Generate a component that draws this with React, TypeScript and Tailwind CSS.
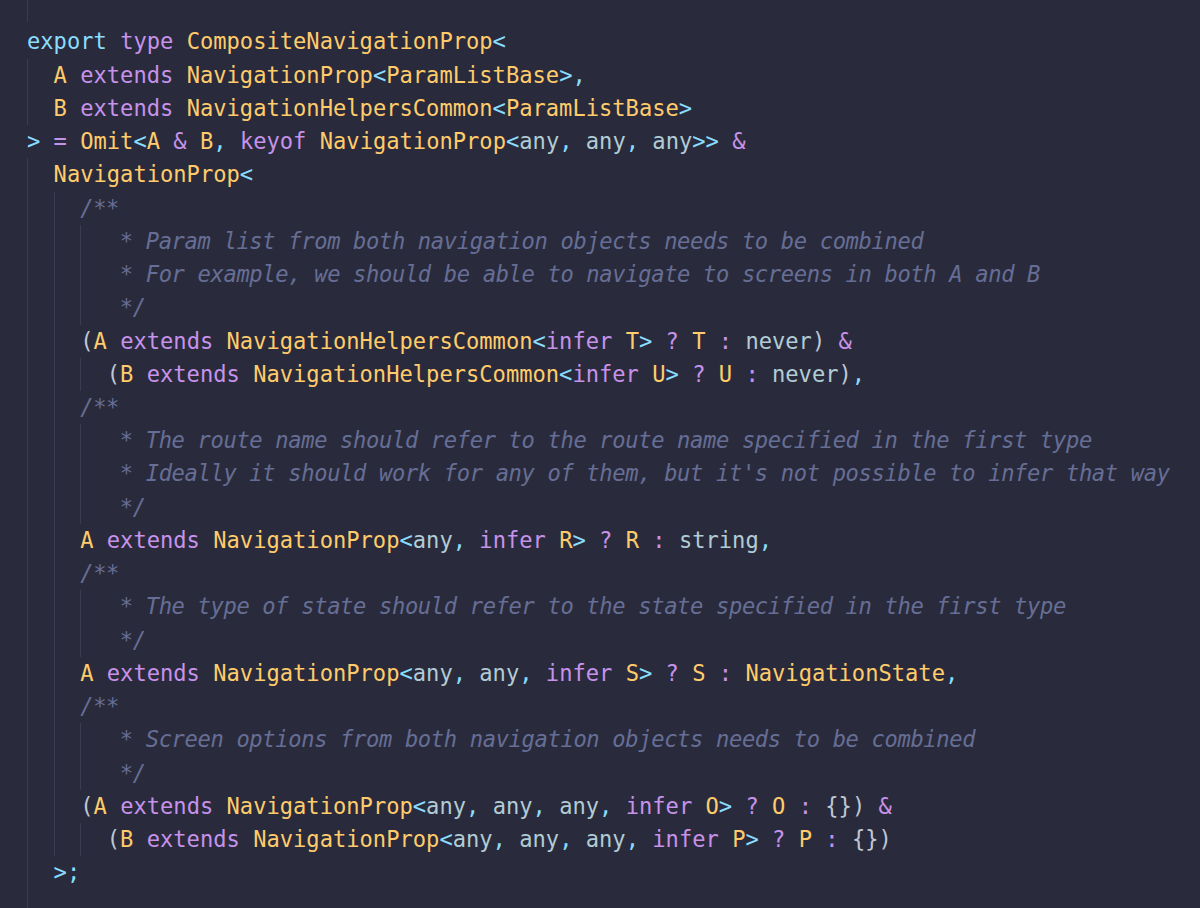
import React from "react";

type Tok = [string, string];
type Line = { g: boolean[]; t: Tok[] };

const CY = "text-[#89ddff]";
const PU = "text-[#c792ea]";
const YE = "text-[#ffcb6b]";
const LI = "text-[#b2ccd6]";
const PA = "text-[#bfc7d5]";
const CM = "text-[#676e95] italic tracking-[-0.34px]";

const lines: Line[] = [
  {
    g: [],
    t: [
      ["export", CY],
      [" ", PA],
      ["type", PU],
      [" ", PA],
      ["CompositeNavigationProp", YE],
      ["<", CY],
    ],
  },
  {
    g: [true],
    t: [
      ["A", YE],
      [" ", PA],
      ["extends", PU],
      [" ", PA],
      ["NavigationProp", YE],
      ["<", CY],
      ["ParamListBase", YE],
      [">,", CY],
    ],
  },
  {
    g: [true],
    t: [
      ["B", YE],
      [" ", PA],
      ["extends", PU],
      [" ", PA],
      ["NavigationHelpersCommon", YE],
      ["<", CY],
      ["ParamListBase", YE],
      [">", CY],
    ],
  },
  {
    g: [],
    t: [
      [">", CY],
      [" = ", PU],
      ["Omit", YE],
      ["<", CY],
      ["A", YE],
      [" & ", PU],
      ["B", YE],
      [",", CY],
      [" ", PA],
      ["keyof", PU],
      [" ", PA],
      ["NavigationProp", YE],
      ["<", CY],
      ["any", LI],
      [",", CY],
      [" any", LI],
      [",", CY],
      [" any", LI],
      [">>", CY],
      [" &", PU],
    ],
  },
  {
    g: [true],
    t: [
      ["NavigationProp", YE],
      ["<", CY],
    ],
  },
  { g: [true, true], t: [["/**", CM]] },
  {
    g: [true, true, true],
    t: [[" * Param list from both navigation objects needs to be combined", CM]],
  },
  {
    g: [true, true, true],
    t: [[" * For example, we should be able to navigate to screens in both A and B", CM]],
  },
  { g: [true, true, true], t: [[" */", CM]] },
  {
    g: [true, true],
    t: [
      ["(", PA],
      ["A", YE],
      [" ", PA],
      ["extends", PU],
      [" ", PA],
      ["NavigationHelpersCommon", YE],
      ["<", CY],
      ["infer", PU],
      [" ", PA],
      ["T", YE],
      [">", CY],
      [" ? ", PU],
      ["T", YE],
      [" : ", PU],
      ["never", LI],
      [")", PA],
      [" &", PU],
    ],
  },
  {
    g: [true, true, true],
    t: [
      ["(", PA],
      ["B", YE],
      [" ", PA],
      ["extends", PU],
      [" ", PA],
      ["NavigationHelpersCommon", YE],
      ["<", CY],
      ["infer", PU],
      [" ", PA],
      ["U", YE],
      [">", CY],
      [" ? ", PU],
      ["U", YE],
      [" : ", PU],
      ["never", LI],
      [")", PA],
      [",", CY],
    ],
  },
  { g: [true, true], t: [["/**", CM]] },
  {
    g: [true, true, true],
    t: [[" * The route name should refer to the route name specified in the first type", CM]],
  },
  {
    g: [true, true, true],
    t: [[" * Ideally it should work for any of them, but it's not possible to infer that way", CM]],
  },
  { g: [true, true, true], t: [[" */", CM]] },
  {
    g: [true, true],
    t: [
      ["A", YE],
      [" ", PA],
      ["extends", PU],
      [" ", PA],
      ["NavigationProp", YE],
      ["<", CY],
      ["any", LI],
      [",", CY],
      [" ", PA],
      ["infer", PU],
      [" ", PA],
      ["R", YE],
      [">", CY],
      [" ? ", PU],
      ["R", YE],
      [" : ", PU],
      ["string", LI],
      [",", CY],
    ],
  },
  { g: [true, true], t: [["/**", CM]] },
  {
    g: [true, true, true],
    t: [[" * The type of state should refer to the state specified in the first type", CM]],
  },
  { g: [true, true, true], t: [[" */", CM]] },
  {
    g: [true, true],
    t: [
      ["A", YE],
      [" ", PA],
      ["extends", PU],
      [" ", PA],
      ["NavigationProp", YE],
      ["<", CY],
      ["any", LI],
      [",", CY],
      [" any", LI],
      [",", CY],
      [" ", PA],
      ["infer", PU],
      [" ", PA],
      ["S", YE],
      [">", CY],
      [" ? ", PU],
      ["S", YE],
      [" : ", PU],
      ["NavigationState", YE],
      [",", CY],
    ],
  },
  { g: [true, true], t: [["/**", CM]] },
  {
    g: [true, true, true],
    t: [[" * Screen options from both navigation objects needs to be combined", CM]],
  },
  { g: [true, true, true], t: [[" */", CM]] },
  {
    g: [true, true],
    t: [
      ["(", PA],
      ["A", YE],
      [" ", PA],
      ["extends", PU],
      [" ", PA],
      ["NavigationProp", YE],
      ["<", CY],
      ["any", LI],
      [",", CY],
      [" any", LI],
      [",", CY],
      [" any", LI],
      [",", CY],
      [" ", PA],
      ["infer", PU],
      [" ", PA],
      ["O", YE],
      [">", CY],
      [" ? ", PU],
      ["O", YE],
      [" : ", PU],
      ["{}", PA],
      [")", PA],
      [" &", PU],
    ],
  },
  {
    g: [true, true, true],
    t: [
      ["(", PA],
      ["B", YE],
      [" ", PA],
      ["extends", PU],
      [" ", PA],
      ["NavigationProp", YE],
      ["<", CY],
      ["any", LI],
      [",", CY],
      [" any", LI],
      [",", CY],
      [" any", LI],
      [",", CY],
      [" ", PA],
      ["infer", PU],
      [" ", PA],
      ["P", YE],
      [">", CY],
      [" ? ", PU],
      ["P", YE],
      [" : ", PU],
      ["{}", PA],
      [")", PA],
    ],
  },
  { g: [true], t: [[">;", CY]] },
  { g: [true], t: [] },
];

function Indent({ guide }: { guide: boolean }) {
  return guide ? (
    <span className="inline-block w-[2ch] h-full shrink-0 border-l border-[#3a3d51]" />
  ) : (
    <span className="inline-block w-[2ch] h-full shrink-0" />
  );
}

export default function App() {
  return (
    <div
      className="w-full h-[908px] overflow-hidden bg-[#292b3c] pl-[27px] text-[22.1px] leading-[33.24px]"
      style={{ fontFamily: '"DejaVu Sans Mono", "Liberation Mono", monospace' }}
    >
      <div className="flex h-[25.4px]">
        <span className="inline-block w-[2ch] h-[22px] border-l border-[#3a3d51]" />
      </div>
      {lines.map((ln, i) => (
        <div key={i} className="flex h-[33.24px] items-stretch whitespace-pre">
          {ln.g.map((gg, j) => (
            <Indent key={j} guide={gg} />
          ))}
          <span>
            {ln.t.map(([s, c], k) => (
              <span key={k} className={c}>
                {s}
              </span>
            ))}
          </span>
        </div>
      ))}
    </div>
  );
}
